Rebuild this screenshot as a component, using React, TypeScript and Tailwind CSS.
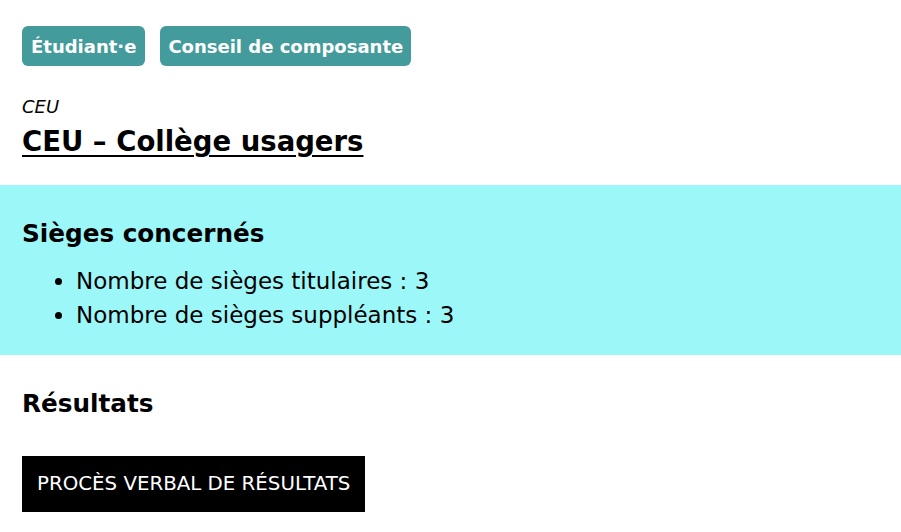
import React from 'react';

const font = { fontFamily: '"DejaVu Sans", "Noto Sans", sans-serif' };

const Badge = ({ label, pad }: { label: string; pad: string }) => (
  <span className={`inline-flex items-center h-[40px] ${pad} rounded-[6px] bg-[#449b9c] text-white font-bold text-[18px]`}>
    {label}
  </span>
);

const App = () => {
  return (
    <div className="min-h-screen bg-white text-black" style={font}>
      {/* étiquettes */}
      <div className="px-[22px] pt-[26px] flex gap-[15px]">
        <Badge label="Étudiant·e" pad="px-[9px]" />
        <Badge label="Conseil de composante" pad="px-[8px]" />
      </div>

      {/* titre */}
      <div className="px-[22px] pt-[29px] pb-[26px]">
        <p className="italic text-[18px] leading-[24px]">CEU</p>
        <h1 className="mt-[4px] text-[27.5px] leading-[36px] font-bold underline underline-offset-[4px] decoration-[2px]">
          CEU – Collège usagers
        </h1>
      </div>

      {/* sièges */}
      <section className="bg-[#9cf7f9] px-[22px] pt-[32px] pb-[23px]">
        <h2 className="text-[24.7px] leading-[34px] font-bold">Sièges concernés</h2>
        <ul className="list-disc pl-[54px] text-[23px] leading-[34px] mt-[13px]">
          <li>Nombre de sièges titulaires : 3</li>
          <li>Nombre de sièges suppléants : 3</li>
        </ul>
      </section>

      {/* résultats */}
      <section className="px-[22px] pt-[32px]">
        <h2 className="text-[24.7px] leading-[34px] font-bold">Résultats</h2>
        <button className="mt-[35px] bg-black text-white uppercase text-[19.8px] h-[56px] px-[15px]">
          Procès verbal de résultats
        </button>
      </section>
    </div>
  );
};

export default App;
